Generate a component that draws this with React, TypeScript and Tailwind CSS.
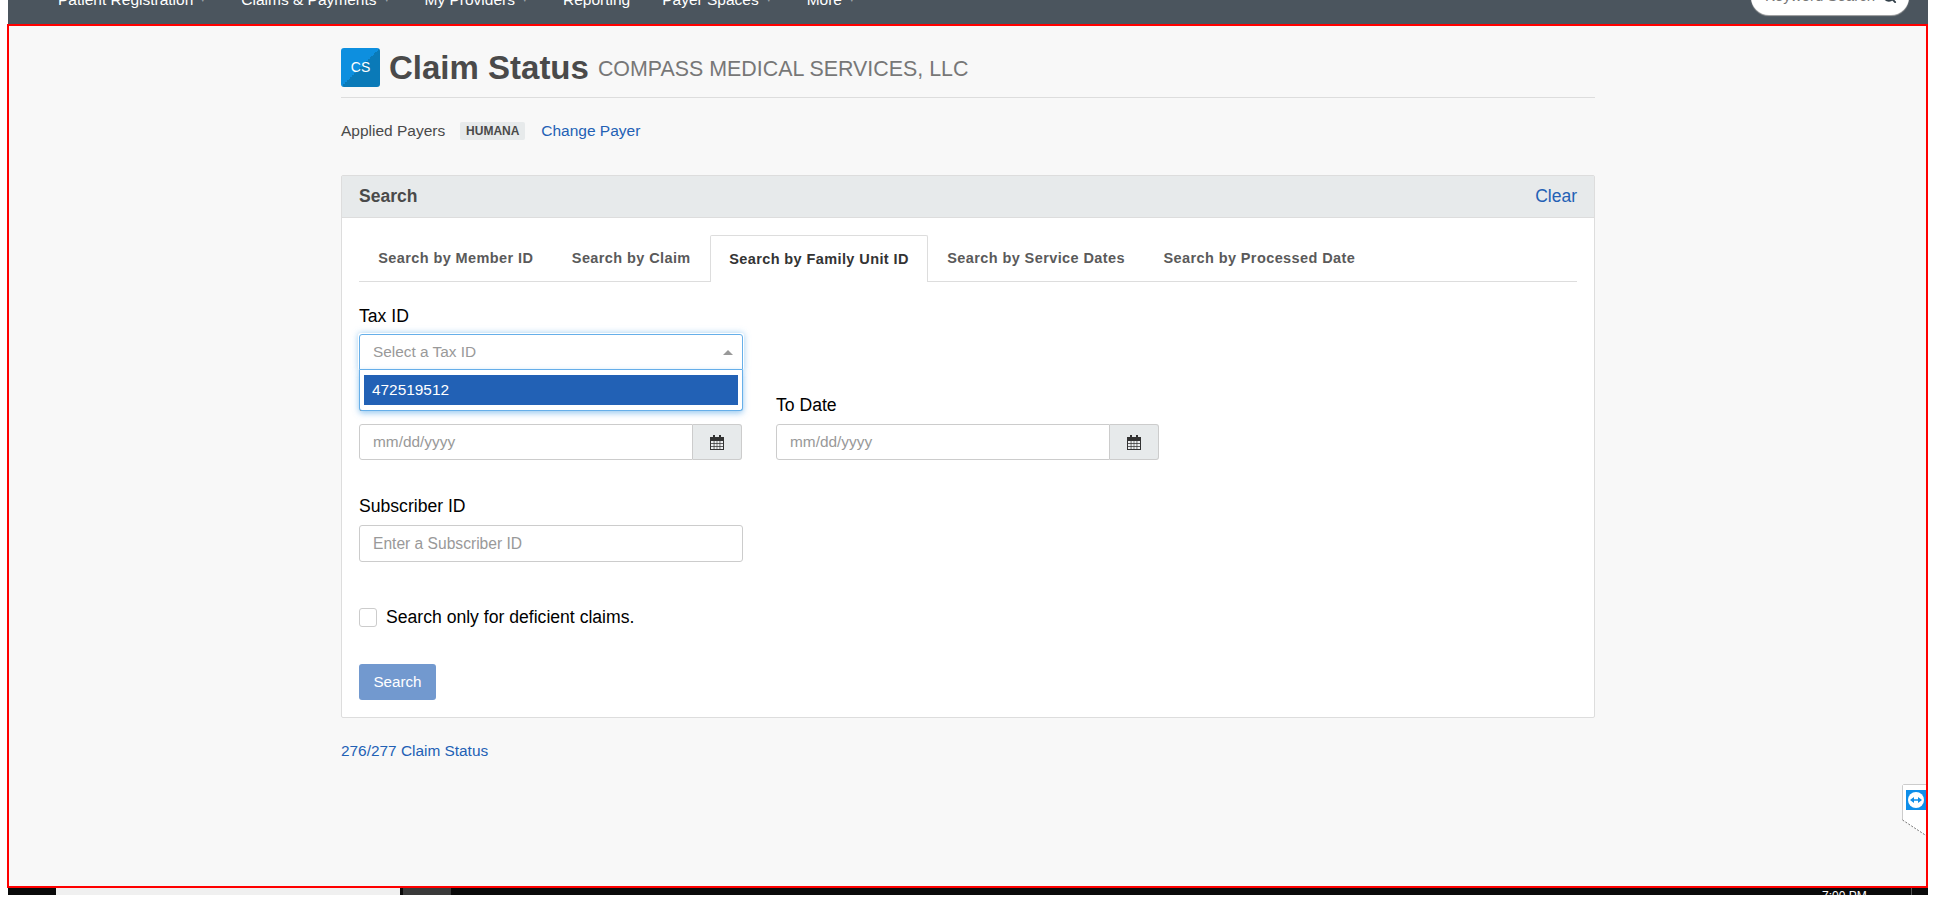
import { Search } from 'lucide-react'

const NAV_ITEMS = [
  { label: 'Patient Registration', caret: true },
  { label: 'Claims & Payments', caret: true },
  { label: 'My Providers', caret: true },
  { label: 'Reporting', caret: false },
  { label: 'Payer Spaces', caret: true },
  { label: 'More', caret: true },
]

const TABS = [
  'Search by Member ID',
  'Search by Claim',
  'Search by Family Unit ID',
  'Search by Service Dates',
  'Search by Processed Date',
]

function CalendarIcon() {
  return (
    <svg width="14" height="15" viewBox="0 0 14 15">
      <path d="M3 0h2v3H3zM9 0h2v3H9z" fill="#333" />
      <path d="M0 2h14v13H0z" fill="#333" />
      <path
        d="M1 6h2.7v2.2H1zM4.4 6h2.3v2.2H4.4zM7.3 6h2.3v2.2H7.3zM10.3 6H13v2.2h-2.7zM1 8.9h2.7v2.2H1zM4.4 8.9h2.3v2.2H4.4zM7.3 8.9h2.3v2.2H7.3zM10.3 8.9H13v2.2h-2.7zM1 11.8h2.7V14H1zM4.4 11.8h2.3V14H4.4zM7.3 11.8h2.3V14H7.3zM10.3 11.8H13V14h-2.7z"
        fill="#eef0f1"
      />
    </svg>
  )
}

function DateField({ label }: { label: string }) {
  return (
    <div className="w-[383px]">
      <label className="block text-[17.6px] leading-6 text-black mb-[7px]">{label}</label>
      <div className="flex h-9">
        <input
          placeholder="mm/dd/yyyy"
          className="w-[334px] h-9 border border-[#ccc] rounded-l-[3px] bg-white px-[13px] text-[15.4px] outline-none placeholder:text-[#999]"
        />
        <span className="flex-1 flex items-center justify-center border border-l-0 border-[#ccc] rounded-r-[3px] bg-[#e7eaeb]">
          <CalendarIcon />
        </span>
      </div>
    </div>
  )
}

export default function App() {
  return (
    <div className="w-[1936px] h-[912px] overflow-hidden bg-white font-['Liberation_Sans',Arial,sans-serif] text-[#4a4a4a]">
      {/* top nav, scrolled mostly out of the capture */}
      <nav className="ml-2 w-[1920px] h-6 bg-[#4b555e] overflow-hidden flex justify-between">
        <ul className="flex pl-[50px] -mt-[9px] text-[15.5px] leading-[17px] text-white">
          {NAV_ITEMS.map(item => (
            <li key={item.label} className="flex items-center h-[17px] mr-[32px]">
              {item.label}
              {item.caret && <span className="w-4 pl-[8px] text-[7px] text-[#9aa2a8]">▾</span>}
            </li>
          ))}
        </ul>
        <div className="mr-[19px] -mt-[21px] w-[158px] h-9 bg-white rounded-full flex items-center justify-between pl-3.5 pr-3 pb-[2px] shadow-[0_1px_1px_#aaa]">
          <span className="text-[15px] text-[#777]">Keyword Search</span>
          <Search size={15} strokeWidth={3} className="text-[#33404a]" />
        </div>
      </nav>

      <main className="relative ml-[7px] w-[1921px] h-[864px] border-2 border-[#f00] bg-[#f8f8f8] pt-[22px] pl-[332px]">
        <div className="w-[1254px]">
          <header className="flex items-center pb-[10px] border-b border-[#ddd]">
            <div className="w-[39px] h-[39px] rounded-[3px] flex items-center justify-center text-[14px] text-white bg-[linear-gradient(to_bottom_right,#0d8fdf_50%,#0a7ab8_50%)]">
              CS
            </div>
            <h1 className="ml-[9px] text-[33px] leading-[39px] font-bold text-[#4a4a4a]">Claim Status</h1>
            <span className="ml-[9px] mt-[3px] text-[21.4px] leading-[36px] text-[#777]">COMPASS MEDICAL SERVICES, LLC</span>
          </header>

          <div className="flex items-center mt-[21px] h-[24px] text-[15.5px]">
            <span>Applied Payers</span>
            <span className="ml-[15px] w-[65px] h-[18px] flex items-center justify-center rounded-[2px] bg-[#e7eaeb] text-[12px] font-bold">
              HUMANA
            </span>
            <a className="ml-4 text-[#2361b5]">Change Payer</a>
          </div>

          <section className="mt-[32px] border border-[#ddd] rounded-[2px] bg-white">
            <div className="flex items-center justify-between h-[42px] px-[17px] bg-[#e7eaeb] border-b border-[#ddd]">
              <h2 className="text-[17.5px] font-bold">Search</h2>
              <a className="text-[17.5px] text-[#2361b5]">Clear</a>
            </div>

            <div className="px-[17px] pt-[17px] pb-[17px]">
              <div className="flex h-[47px] border-b border-[#ddd]">
                {TABS.map((tab, i) => (
                  <div
                    key={tab}
                    className={
                      i === 2
                        ? 'h-[47px] px-[18.25px] pt-[2px] flex items-center border border-b-0 border-[#ddd] rounded-t-[2px] bg-white text-[14.5px] font-bold tracking-[0.4px] text-[#333]'
                        : 'h-[46px] px-[18.25px] pt-[2px] flex items-center border border-transparent text-[14.5px] font-bold tracking-[0.4px] text-[#5a5a5a]'
                    }
                  >
                    {tab}
                  </div>
                ))}
              </div>

              <label className="block mt-[22px] mb-[6px] text-[17.6px] leading-6 text-black">Tax ID</label>
              <div className="relative w-[384px] h-9">
                <div className="flex items-center justify-between h-9 pl-[13px] pr-[9px] border border-[#66afe9] rounded-t-[3px] bg-white text-[15.4px] text-[#999]">
                  Select a Tax ID
                  <span className="w-0 h-0 border-x-[5px] border-x-transparent border-b-[5px] border-b-[#999]" />
                </div>
                <div className="absolute z-10 top-9 left-0 w-full h-[41px] px-1 py-[5px] border border-t-0 border-[#66afe9] rounded-b-[3px] bg-white shadow-[0_2px_6px_rgba(102,175,233,0.7)]">
                  <div className="h-[30px] flex items-center px-2 bg-[#2261b5] text-[15.4px] text-white">472519512</div>
                </div>
                <div className="absolute -inset-[1px] -z-0 rounded-[3px] shadow-[0_0_6px_rgba(102,175,233,0.6)] pointer-events-none" />
              </div>

              <div className="flex gap-[34px] mt-[23px]">
                <DateField label="From Date" />
                <DateField label="To Date" />
              </div>

              <label className="block mt-[34px] mb-[7px] text-[17.6px] leading-6 text-black">Subscriber ID</label>
              <input
                placeholder="Enter a Subscriber ID"
                className="block w-[384px] h-[37px] border border-[#ccc] rounded-[3px] bg-white px-[13px] text-[15.6px] outline-none placeholder:text-[#999]"
              />

              <label className="flex items-center mt-[46px] h-[19px] text-[17.6px] text-black">
                <span className="w-[18px] h-[19px] border border-[#ccc] rounded-[3px] bg-white" />
                <span className="ml-[9px]">Search only for deficient claims.</span>
              </label>

              <button className="block mt-[37px] w-[77px] h-9 rounded-[3px] bg-[#7299cf] text-[15.2px] text-white">
                Search
              </button>
            </div>
          </section>

          <a className="block mt-[24px] text-[15.4px] leading-[18px] text-[#2361b5]">276/277 Claim Status</a>
        </div>

        {/* remote support tab stuck on the right edge */}
        <div className="absolute right-0 top-[758px] w-6 h-[52px] pl-1 pt-[6px]">
          <svg width="24" height="52" viewBox="0 0 24 52" className="absolute inset-0">
            <path d="M24 .5H1.5L.5 1.5V36L24 51.5z" fill="#fff" />
            <path d="M24 .5H1.5L.5 1.5V36" fill="none" stroke="#ccc" />
            <path d="M.5 36L24 51.5" fill="none" stroke="#777" strokeDasharray="2 1.5" />
          </svg>
          <div className="relative w-5 h-5 bg-[#0e8ee9] flex items-center justify-center">
            <svg width="18" height="18" viewBox="0 0 18 18">
              <circle cx="9" cy="9" r="8" fill="#fff" />
              <path d="M3 9l4-3v2.2h4V6l4 3-4 3V9.8H7V12z" fill="#0e8ee9" />
            </svg>
          </div>
        </div>
      </main>

      {/* windows taskbar, cut off at the bottom */}
      <footer className="ml-2 w-[1920px] h-[7px] bg-[#0a0a0a] overflow-hidden flex">
        <div className="w-12" />
        <div className="w-[344px] bg-[#f0f0f0]" />
        <div className="w-[3px]" />
        <div className="w-12 bg-[#3a3a3a]" />
        <div className="ml-[1371px] w-[50px] whitespace-nowrap pt-px text-[12px] leading-[14px] text-white">7:00 PM</div>
        <div className="ml-[39px] w-px bg-[#555]" />
      </footer>
    </div>
  )
}
